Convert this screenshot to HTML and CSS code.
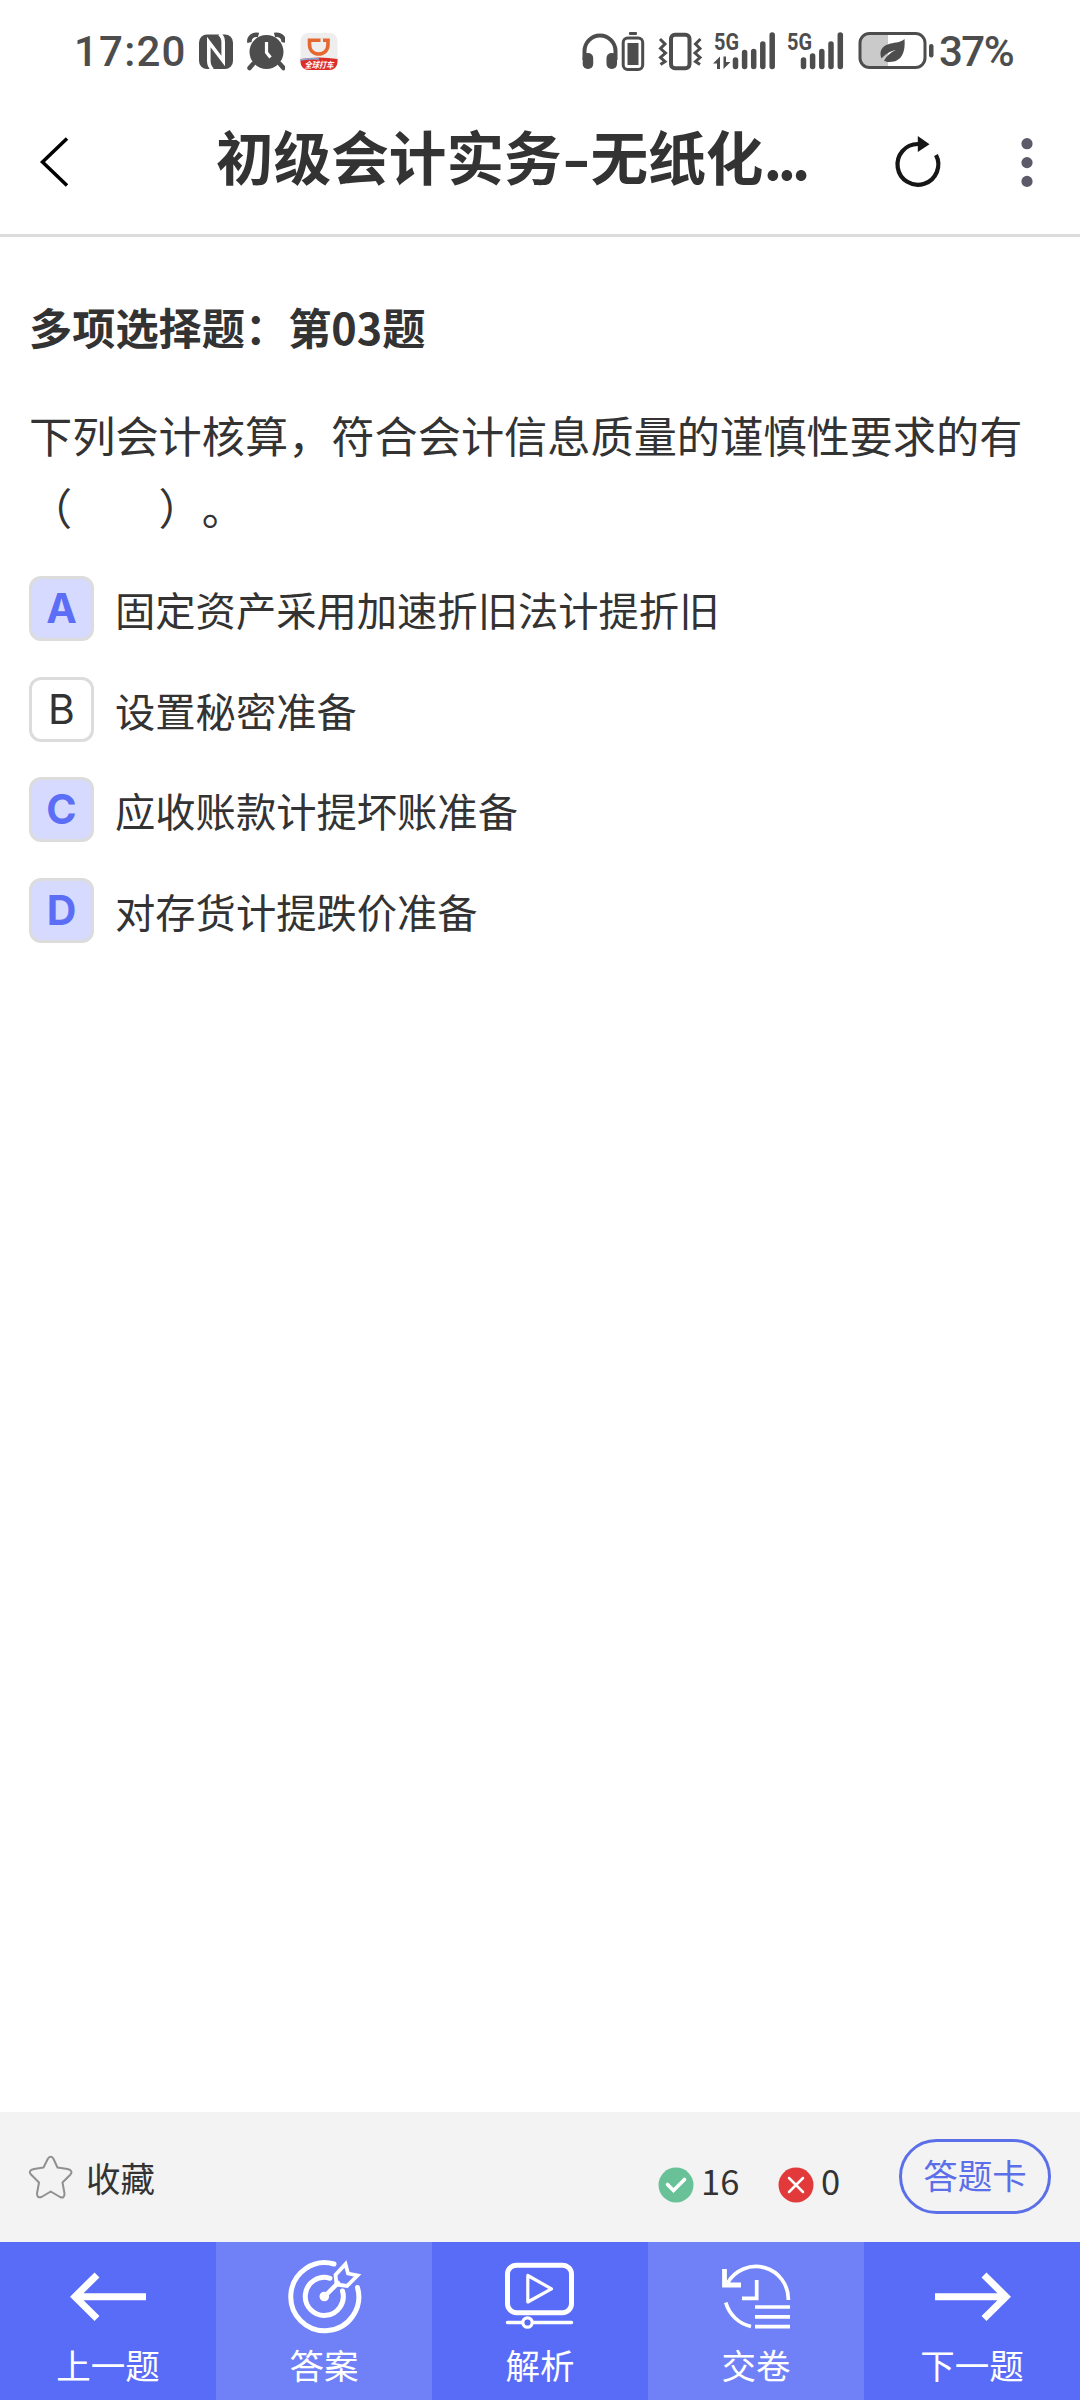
FILE: index.html
```html
<!DOCTYPE html>
<html lang="zh-CN">
<head>
<meta charset="utf-8">
<title>初级会计实务</title>
<link rel="stylesheet" href="styles.css">
</head>
<body>
<div class="status">
  <span class="clock">17:20</span>
  <svg class="nfc" width="36" height="40" viewBox="198 32 36 40"><rect x="199" y="34.500" width="34" height="34.500" rx="8" fill="#4d4d4d"/><path d="M212.500 69.500Q208.800 66 208.800 61V42L223.200 61V42Q223.200 37 219.500 34" fill="none" stroke="#fff" stroke-width="3.600"/></svg>
  <svg class="alarm" width="38" height="40" viewBox="247 32 38 40"><circle cx="266.500" cy="52" r="17" fill="#4d4d4d"/><path d="M253 64l-3.500 4M280 64l3.500 4" stroke="#4d4d4d" stroke-width="4.500" stroke-linecap="round"/><path d="M249.500 42.500c-1-5 4-9 9-7.500M283.500 42.500c1-5-4-9-9-7.500" fill="none" stroke="#4d4d4d" stroke-width="4.500"/><path d="M266.500 42v10.500l4 5" fill="none" stroke="#fff" stroke-width="3.200"/></svg>
  <svg class="taxi" width="38" height="40" viewBox="299.500 32 38 40"><rect x="300" y="33" width="37" height="37" rx="8" fill="#eee"/><path d="M300 59q18.500-3 37 0v3a8 8 0 0 1-8 8h-21a8 8 0 0 1-8-8z" fill="#dc2d28"/><path d="M300 60q10-2 18.500-1" fill="none" stroke="#7ab2e8" stroke-width="1.500"/><path d="M309 40.300h18.500v4c0 6-4 9.700-9.300 9.700s-9.200-3.700-9.200-9.700z" fill="none" stroke="#e4682f" stroke-width="3.600"/><path d="M320 38.300h2.500v4.500H320z" fill="#eee"/><text x="304" y="68" class="taxi-text" textLength="29" lengthAdjust="spacingAndGlyphs">全球打车</text></svg>
  <span class="spacer"></span>
  <svg width="36" height="40" viewBox="582 32 36 40"><path d="M584.500 60v-9a15.500 15.500 0 0 1 31 0v9" fill="none" stroke="#4d4d4d" stroke-width="4"/><rect x="582.700" y="53" width="10.500" height="16" rx="5" fill="#4d4d4d"/><rect x="606.500" y="53" width="10.500" height="16" rx="5" fill="#4d4d4d"/></svg>
  <svg class="cell" width="24" height="40" viewBox="621 32 24 40"><rect x="629" y="32" width="8" height="3" rx="1" fill="#4d4d4d"/><rect x="623.200" y="38" width="19.500" height="31.500" rx="4.500" fill="none" stroke="#4d4d4d" stroke-width="3"/><rect x="627.500" y="43" width="11" height="22" fill="#4d4d4d"/></svg>
  <svg class="vibrate" width="44" height="40" viewBox="658 32 44 40"><rect x="671" y="34.700" width="18.500" height="33.500" rx="4" fill="none" stroke="#4d4d4d" stroke-width="4"/><path d="M660 39l5 5-4.500 4.500 5 4.500-5 4.500 4.500 4-4.500 3M700.500 39l-5 5 4.500 4.500-5 4.500 5 4.500-4.500 4 4.500 3" fill="none" stroke="#4d4d4d" stroke-width="3"/></svg>
  <svg class="sim1" width="64" height="50" viewBox="713 22 64 50"><text x="714" y="50" class="net" textLength="25" lengthAdjust="spacingAndGlyphs">5G</text><path d="M720 56.500V69h-3v-5.500H713zM723.500 69V56.500h2.500v5.500h4.500z" fill="#4d4d4d"/><path d="M735.500 60v6.500M744.600 52.500v14M753.700 51.500v15M762.800 44v22.500M772.200 35v31.500" stroke="#4d4d4d" stroke-width="5.500" stroke-linecap="round"/></svg>
  <svg class="sim2" width="58" height="50" viewBox="786 22 58 50"><text x="787" y="50" class="net" textLength="25" lengthAdjust="spacingAndGlyphs">5G</text><path d="M803.500 60v6.500M812.600 56v10.500M821.800 51.500v15M831 44v22.500M840.300 35v31.500" stroke="#4d4d4d" stroke-width="5.500" stroke-linecap="round"/></svg>
  <svg class="batt" width="77" height="40" viewBox="858 32 77 40"><path d="M868 34h20v33h-20a8 8 0 0 1-8-8V42a8 8 0 0 1 8-8z" fill="#cacaca"/><rect x="860" y="33.500" width="65" height="34" rx="9.500" fill="none" stroke="#4d4d4d" stroke-width="3"/><rect x="929" y="44" width="4.500" height="13.500" rx="2.200" fill="#4d4d4d"/><path d="M904.500 39c1 12-2 23-15 23-2 0-4-.5-5.500-1.500 3-5 7-8.500 12-10.500-6 1-11 4.500-14.500 8.500-3-8 1-13 9-15 5-1 10-1 14-4.500z" fill="#4d4d4d"/></svg>
  <span class="percent">37%</span>
</div>
<header class="head">
  <svg width="32" height="56" viewBox="38 135 32 56"><path d="M67 138.500L42.500 162 67 185.500" fill="none" stroke="#000" stroke-width="3.500"/></svg>
  <h1 class="title">初级会计实务<span class="dash">-</span>无纸化<span class="dots">...</span></h1>
  <svg class="reload" width="50" height="60" viewBox="894 133 50 60"><path d="M919 144A20.400 20.400 0 1 0 937 155" fill="none" stroke="#161616" stroke-width="4.200"/><path d="M918.800 136v16L930.500 144.300z" fill="#161616"/></svg>
  <svg class="more" width="14" height="60" viewBox="1019.500 133 14 60"><g fill="#5c5a68"><circle cx="1026.500" cy="143.700" r="5.600"/><circle cx="1026.500" cy="162.600" r="5.600"/><circle cx="1026.500" cy="181.400" r="5.600"/></g></svg>
</header>
<main class="main">
  <h2 class="kind">多项选择题：第03题</h2>
  <p class="question">下列会计核算，符合会计信息质量的谨慎性要求的有<br>（　　）。</p>
  <ul class="options">
    <li class="option"><span class="box on">A</span>固定资产采用加速折旧法计提折旧</li>
    <li class="option"><span class="box">B</span>设置秘密准备</li>
    <li class="option"><span class="box on">C</span>应收账款计提坏账准备</li>
    <li class="option"><span class="box on">D</span>对存货计提跌价准备</li>
  </ul>
</main>
<div class="tools">
  <svg class="star" width="46" height="46" viewBox="28 2154 46 46"><path d="M48 2158.500Q50.700 2155 53.300 2158.500L57.500 2167.500 67.500 2169Q73.500 2170.500 70.500 2174.500L62.500 2182.500 64.500 2193.500Q64.500 2199 60 2197L50.700 2191.500 41.500 2197Q37 2198.500 37 2193.500L39 2182.500 31 2174.500Q27.500 2170.500 34 2169L43.500 2167.500Z" fill="none" stroke="#909090" stroke-width="2" stroke-linejoin="round"/></svg>
  <span class="fav">收藏</span>
  <span class="spacer"></span>
  <svg class="mark" width="36" height="36" viewBox="0 0 36 36"><circle cx="18" cy="18" r="17.500" fill="#69c297"/><path d="M9.500 17.500l6 6 11-11" fill="none" stroke="#fff" stroke-width="3.600" stroke-linecap="round"/></svg>
  <span class="num right-num">16</span>
  <svg class="mark" width="36" height="36" viewBox="0 0 36 36"><circle cx="18" cy="18" r="17.500" fill="#e23a3b"/><path d="M11 11l14 14M25 11L11 25" stroke="#fff" stroke-width="2.500" stroke-linecap="round"/></svg>
  <span class="num wrong-num">0</span>
  <a class="card">答题卡</a>
</div>
<nav class="nav">
  <a class="tab"><svg width="80" height="80" viewBox="68 2256 80 80"><path d="M146 2296.700H76M97 2275L75 2296.700 97 2318.500" fill="none" stroke="#fff" stroke-width="7"/></svg>上一题</a>
  <a class="tab light"><svg width="80" height="80" viewBox="284 2256 80 80"><g fill="none" stroke="#fff" stroke-linecap="round" stroke-width="5"><path d="M334 2264A34 34 0 1 0 357.500 2287.500"/><path d="M330 2278.300A19 19 0 1 0 342.500 2291"/><path d="M324.500 2296.500L338 2283" stroke-width="4.500"/><path d="M336.500 2284.500L335.500 2275 345.500 2264 348 2273.500 357.500 2275.500 347 2286Z" stroke-width="3.800" stroke-linecap="butt"/></g><circle cx="324.300" cy="2296.500" r="4.800" fill="#fff"/></svg>答案</a>
  <a class="tab"><svg width="80" height="80" viewBox="500 2256 80 80"><g fill="none" stroke="#fff"><rect x="507.500" y="2265.200" width="64" height="47.500" rx="9" stroke-width="5"/><path d="M527.800 2275.500V2302L551.500 2288.800Z" stroke-width="3.200" stroke-linejoin="round"/><path d="M507.500 2322.500H522M533 2322.500H571.500" stroke-width="3.500" stroke-linecap="round"/><circle cx="527.500" cy="2322.500" r="4.700" stroke-width="3.200"/></g></svg>解析</a>
  <a class="tab light"><svg width="80" height="80" viewBox="716 2256 80 80"><g fill="none" stroke="#fff" stroke-width="3.700"><path d="M727.500 2283A32.500 32.500 0 0 1 788.300 2300"/><path d="M724.500 2269V2285H741" stroke-width="4.800"/><path d="M725.800 2302.500A34 34 0 0 0 751 2326.500"/><path d="M756.700 2280V2298.300H742M755 2307H790M755 2316.800H790M755 2326.700H790"/></g></svg>交卷</a>
  <a class="tab"><svg width="80" height="80" viewBox="932 2256 80 80"><path d="M935 2296.700H1005M984 2275L1006 2296.700 984 2318.500" fill="none" stroke="#fff" stroke-width="7"/></svg>下一题</a>
</nav>
</body>
</html>
```
FILE: styles.css
```css
* { box-sizing: border-box; margin: 0; padding: 0; }
body {
  width: 1080px;
  height: 2400px;
  display: flex;
  flex-direction: column;
  background: #fff;
  color: #333;
  font-family: "Noto Sans CJK SC", sans-serif;
  overflow: hidden;
}
svg { display: block; flex: none; }
.spacer { flex: 1; }

.status {
  display: flex;
  height: 104px;
  padding: 32px 66px 0 74px;
  color: #4d4d4d;
}
.clock, .percent {
  font: 500 42px/39px Roboto, sans-serif;
  white-space: nowrap;
}
.clock { width: 124px; letter-spacing: 1.2px; }
.percent { width: 75px; margin-left: 4px; letter-spacing: -1.5px; }
.alarm { margin-left: 13px; }
.taxi { margin-left: 14.5px; }
.taxi-text { font: italic 700 8.5px "Noto Sans CJK SC", sans-serif; fill: #fff; }
.cell { margin-left: 3px; }
.vibrate { margin-left: 13px; }
.sim1 { margin: -10px 0 0 11px; }
.sim2 { margin: -10px 0 0 9px; }
.batt { margin-left: 14px; }
.net { font: 700 24px Roboto, sans-serif; fill: #4d4d4d; }

.head {
  display: flex;
  align-items: center;
  height: 133px;
  padding: 0 46.5px 12px 38px;
  border-bottom: 3px solid #dcdcdc;
}
.title {
  width: 600px;
  margin: -16px 0 0 146px;
  font-size: 57.6px;
  font-weight: 700;
  line-height: 80px;
  white-space: nowrap;
}
.dash {
  display: inline-block;
  width: 29px;
  text-align: center;
  transform: scaleX(1.35);
}
.dots { letter-spacing: -4.5px; }
.reload { margin-left: 77px; }
.more { margin-left: auto; }

.main { flex: 1; padding: 53px 29px 0; }
.kind { font-size: 43.2px; font-weight: 700; line-height: 72px; }
.question {
  margin-top: 36px;
  font-size: 43.2px;
  line-height: 72px;
  white-space: nowrap;
  text-spacing-trim: space-all;
}
.options {
  display: flex;
  flex-direction: column;
  gap: 35.7px;
  margin-top: 34px;
  list-style: none;
}
.option {
  display: flex;
  align-items: center;
  height: 65px;
  font-size: 40.3px;
  line-height: 63px;
  white-space: nowrap;
}
.box {
  width: 65px;
  height: 65px;
  margin-right: 21px;
  border: 3px solid #dcdcdc;
  border-radius: 12px;
  font: 400 41px/59px Inter, sans-serif;
  text-align: center;
}
.on { background: #d6daff; color: #5b6ef5; font-weight: 700; }

.tools {
  display: flex;
  align-items: center;
  height: 130px;
  padding: 0 29px 0 28px;
  background: #f3f3f3;
  font-size: 34.5px;
}
.fav { margin-left: 12px; }
.mark { margin-top: 15px; }
.num { flex: none; line-height: 50px; }
.right-num { width: 70px; margin: 6px 7px 0 7px; }
.wrong-num { width: 78px; margin: 6px 0 0 7px; }
.card {
  width: 152px;
  height: 75px;
  margin-top: -2px;
  border: 3px solid #5b6fe8;
  border-radius: 38px;
  color: #5b6fe8;
  text-align: center;
  line-height: 65px;
}

.nav { display: flex; height: 158px; }
.tab {
  display: flex;
  flex: 1;
  flex-direction: column;
  align-items: center;
  padding-top: 14px;
  background: #596cf7;
  color: #fff;
  font-size: 34.5px;
  line-height: 56px;
}
.light { background: #7081f8; }
```
